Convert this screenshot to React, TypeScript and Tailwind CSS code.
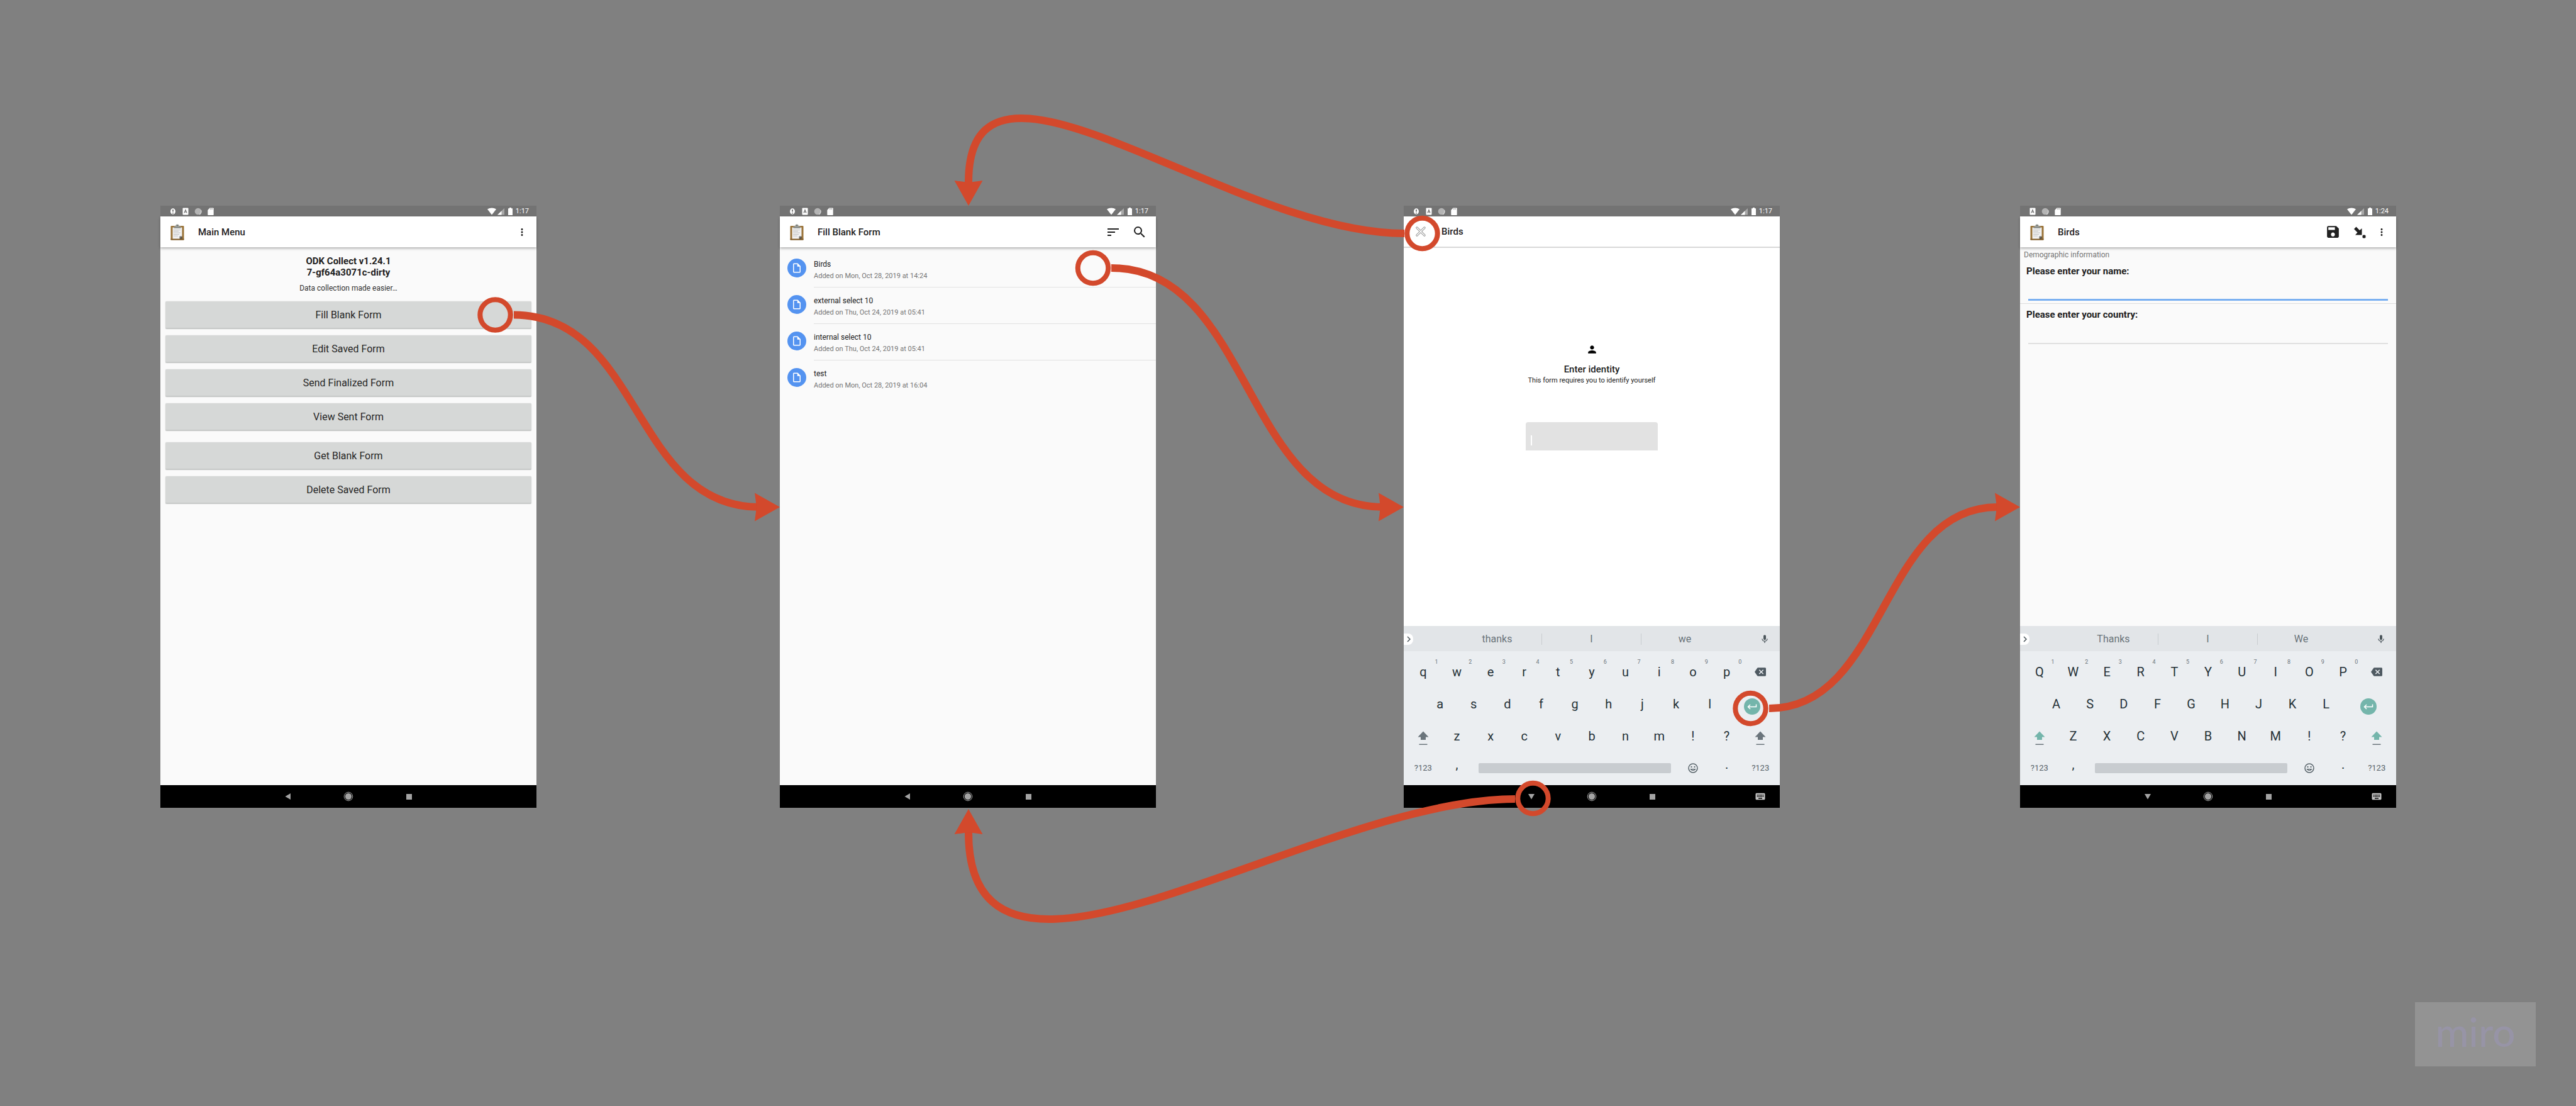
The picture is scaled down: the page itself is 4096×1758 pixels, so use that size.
import type { ReactNode } from "react";
import {
  MdBackspace,
  MdKeyboard,
  MdMic,
  MdMoreVert,
  MdOutlineInsertDriveFile,
  MdPerson,
  MdSave,
  MdSearch,
  MdSort,
} from "react-icons/md";

/* ---------- small drawings ---------- */

function ClipboardIcon() {
  return (
    <svg viewBox="0 0 22 26" className="h-[26px] w-[22px]" aria-hidden="true">
      <rect x="0.5" y="3" width="21" height="22.5" rx="1" fill="#9a7338" />
      <rect x="0.5" y="23.5" width="21" height="2" fill="#7d5a28" />
      <path d="M3.5 5.5h15v14l-4 4h-11z" fill="#f1f1f1" />
      <path d="M18.5 19.5l-4 4v-4z" fill="#6e6e6e" />
      <path d="M14.5 23.5l4-4v4z" fill="#4f4f4f" />
      <path d="M5 9.500h11M5 11.500h8M5 14h11M5 16.500h9M5 19h7" stroke="#bdbdbd" strokeWidth="0.9" />
      <path d="M5.500 6.500V3.800h2.700C8.200 1.500 9.300 0.500 11 0.500s2.800 1 2.800 3.300h2.700v2.700z" fill="#9ba09c" />
      <path d="M5.500 5.500h11v1h-11z" fill="#6d716e" />
      <circle cx="11" cy="2.600" r="1" fill="#6b6b6b" />
    </svg>
  );
}

function CloseIcon() {
  return (
    <svg viewBox="0 0 16 16" className="size-4" aria-hidden="true">
      <path d="M2 2l12 12M14 2L2 14" stroke="#8f8f8f" strokeWidth="3.200" strokeLinecap="round" />
      <path d="M2 2l12 12M14 2L2 14" stroke="#ffffff" strokeWidth="1.600" strokeLinecap="round" />
    </svg>
  );
}

function JumpIcon() {
  return (
    <svg viewBox="0 0 24 24" className="size-6" aria-hidden="true">
      <path d="M6.500 3.500L12 9l3.500-3v10.500H5L8.500 12.500 3 7z" fill="#212121" />
      <rect x="16.500" y="16.500" width="5" height="5" rx="1.500" fill="#212121" />
    </svg>
  );
}

function AlertGlyph() {
  return (
    <svg viewBox="0 0 10 12" className="h-3 w-2.5" aria-hidden="true">
      <ellipse cx="5" cy="6" rx="4" ry="4.700" fill="#ffffff" />
      <path d="M5 3v3.500M5 8v1.500" stroke="#737373" strokeWidth="1.800" />
    </svg>
  );
}

function LetterGlyph() {
  return (
    <svg viewBox="0 0 10 12" className="h-3 w-2.5" aria-hidden="true">
      <rect x="0.500" y="0.500" width="9" height="11" rx="1" fill="#ffffff" />
      <path d="M3 8.500L5 3.500l2 5M3.800 7h2.500" stroke="#737373" strokeWidth="1.200" fill="none" />
    </svg>
  );
}

function DiscGlyph() {
  return (
    <svg viewBox="0 0 12 12" className="size-3" aria-hidden="true">
      <circle cx="6" cy="6" r="5.300" fill="#b4b4b4" />
      <path d="M10.500 4A5.300 5.300 0 0 1 8 11" stroke="#dcdcdc" strokeWidth="1.200" fill="none" />
    </svg>
  );
}

function CardGlyph() {
  return (
    <svg viewBox="0 0 10 12" className="h-3 w-2.5" aria-hidden="true">
      <path d="M3.500 0.500H9a0.700 0.700 0 0 1 0.700 0.700v10a0.700 0.700 0 0 1-0.700 0.700H1a0.700 0.700 0 0 1-0.700-0.700V4z" fill="#ffffff" />
      <path d="M4.300 1.200v2M6 1.200v2M7.700 1.200v2" stroke="#8f8f8f" strokeWidth="0.800" />
    </svg>
  );
}

function SignalGlyphs() {
  return (
    <svg viewBox="0 0 42 14" className="h-3.5 w-[42px]" aria-hidden="true">
      <path d="M1 3.500C5 0.800 11 0.800 15 3.500L8 12.500z" fill="#ffffff" />
      <path d="M28 2v10.500H17z" fill="#a8a8a8" />
      <path d="M23.500 6.300v6.200H17z" fill="#ffffff" />
      <path d="M34 2.200h2V1h3v1.200h2V13h-7z" fill="#ffffff" />
    </svg>
  );
}

function ShiftIcon({ active }: { active: boolean }) {
  return (
    <svg viewBox="0 0 18 23" className="h-[23px] w-[18px]" aria-hidden="true">
      <path d="M9 0.500L17.500 9.500H13V14H5V9.500H0.500z" fill={active ? "#74b5ab" : "#6b757c"} />
      <rect x="2.500" y="20.500" width="13" height="1.500" fill="#6b757c" />
    </svg>
  );
}

function FaceIcon() {
  return (
    <svg viewBox="0 0 18 18" className="size-[18px]" aria-hidden="true">
      <circle cx="9" cy="9" r="7" fill="none" stroke="#59646b" strokeWidth="1.500" />
      <rect x="5.500" y="6" width="2" height="2" fill="#59646b" />
      <rect x="10.500" y="6" width="2" height="2" fill="#59646b" />
      <path d="M5.500 10.500q3.500 4 7 0z" fill="none" stroke="#59646b" strokeWidth="1.200" />
    </svg>
  );
}

function EnterIcon() {
  return (
    <svg viewBox="0 0 26 26" className="size-[26px]" aria-hidden="true">
      <circle cx="13" cy="13" r="13" fill="#74b5ab" />
      <path d="M19.500 9.500v4H7M10 10l-3.500 3.500L10 17" fill="none" stroke="#ffffff" strokeWidth="1.500" />
    </svg>
  );
}

/* ---------- phone chrome ---------- */

type PhoneProps = {
  title: string;
  time: string;
  leading?: ReactNode;
  actions?: ReactNode;
  alert?: boolean;
  flat?: boolean;
  keyboard?: "lower" | "upper";
  children: ReactNode;
};

function StatusBar({ time, alert }: { time: string; alert: boolean }) {
  return (
    <div className="flex h-[17px] shrink-0 items-center bg-[#737373] pl-2.5 pr-3 text-white">
      {alert && <span className="flex w-5 justify-center"><AlertGlyph /></span>}
      <span className="flex w-5 justify-center"><LetterGlyph /></span>
      <span className="flex w-5 justify-center"><DiscGlyph /></span>
      <span className="flex w-5 justify-center"><CardGlyph /></span>
      <span className="ml-auto flex items-center gap-1">
        <SignalGlyphs />
        <span className="text-[11px] leading-none">{time}</span>
      </span>
    </div>
  );
}

function NavBar({ withKeyboard }: { withKeyboard: boolean }) {
  return (
    <nav className="relative flex h-9 shrink-0 items-center justify-center gap-20 bg-black">
      <button aria-label="Back" className="flex w-4 justify-center">
        <svg viewBox="0 0 10 10" className="size-2.5" aria-hidden="true">
          <path d={withKeyboard ? "M0 1h10L5 9.500z" : "M9 0v10L0.500 5z"} fill="#a3a3a3" />
        </svg>
      </button>
      <button aria-label="Home" className="flex w-4 justify-center">
        <svg viewBox="0 0 16 16" className="size-4" aria-hidden="true">
          <circle cx="8" cy="8" r="6.800" fill="none" stroke="#a3a3a3" strokeWidth="1" />
          <circle cx="8" cy="8" r="5.200" fill="#a3a3a3" />
        </svg>
      </button>
      <button aria-label="Recent apps" className="flex w-4 justify-center">
        <span className="size-[9px] bg-[#a3a3a3]" />
      </button>
      {withKeyboard && (
        <button aria-label="Choose keyboard" className="absolute right-[22px] text-[#c4c4c4]">
          <MdKeyboard size={18} />
        </button>
      )}
    </nav>
  );
}

function Key({ children, hint, className = "col-span-2", label }: { children?: ReactNode; hint?: string; className?: string; label?: string }) {
  return (
    <button aria-label={label} className={`${className} relative flex h-full items-center justify-center`}>
      {children}
      {hint && <span className="absolute right-[3px] top-[5px] text-[9px] leading-none text-[#6b757c]">{hint}</span>}
    </button>
  );
}

function Keyboard({ mode }: { mode: "lower" | "upper" }) {
  const upper = mode === "upper";
  const cased = (text: string) => (upper ? text.toUpperCase() : text);
  const words = upper ? ["Thanks", "I", "We"] : ["thanks", "I", "we"];
  return (
    <div className="shrink-0 bg-[#ebeef1] text-[#263238]">
      <div className="flex h-10 items-center bg-[#e2e5e8] pt-0.5 text-base leading-none text-[#6a747a]">
        <button aria-label="More" className="flex h-[18px] w-[15px] items-center justify-center rounded-r-lg bg-white">
          <svg viewBox="0 0 6 10" className="h-2.5 w-1.5" aria-hidden="true">
            <path d="M1 1l4 4-4 4" fill="none" stroke="#4b555b" strokeWidth="1.500" />
          </svg>
        </button>
        <div className="grid flex-1 grid-cols-[142fr_158fr_138fr] pl-[63px]">
          {words.map((word, i) => (
            <button key={word} className={i < 2 ? "h-[18px] border-r border-[#c9cdd0] leading-[18px]" : "h-[18px] leading-[18px]"}>
              {word}
            </button>
          ))}
        </div>
        <button aria-label="Voice input" className="flex w-[82px] justify-center pl-[34px] text-[#4b555b]">
          <MdMic size={16} />
        </button>
      </div>
      <div className="grid h-[213px] auto-rows-fr grid-cols-[repeat(22,minmax(0,1fr))] px-1 pb-0.5 pt-2 text-xl leading-none">
        {"qwertyuiop".split("").map((c, i) => (
          <Key key={c} hint={String((i + 1) % 10)}>{cased(c)}</Key>
        ))}
        <Key label="Backspace"><MdBackspace size={18} className="text-[#4f5a62]" /></Key>
        <span />
        {"asdfghjkl".split("").map((c) => (
          <Key key={c}>{cased(c)}</Key>
        ))}
        <Key label="Enter" className="col-span-3 pt-2"><EnterIcon /></Key>
        <Key label="Shift" className="col-span-2 pt-2"><ShiftIcon active={upper} /></Key>
        {"zxcvbnm!?".split("").map((c) => (
          <Key key={c}>{cased(c)}</Key>
        ))}
        <Key label="Right shift" className="col-span-2 pt-2"><ShiftIcon active={upper} /></Key>
        <Key className="col-span-2 text-[13px] text-[#59646b]">?123</Key>
        <Key className="col-span-2 pb-3">,</Key>
        <Key label="Space" className="col-span-12 px-2"><span className="h-4 w-full rounded-xs bg-[#c8ccd0]" /></Key>
        <Key label="Emoji"><FaceIcon /></Key>
        <Key className="col-span-2 pb-3">.</Key>
        <Key className="col-span-2 text-[13px] text-[#59646b]">?123</Key>
      </div>
    </div>
  );
}

function Phone({ title, time, leading, actions, alert = true, flat = false, keyboard, children }: PhoneProps) {
  return (
    <section aria-label={title} className="flex aspect-[598/957] flex-col bg-[#fafafa] text-[#212121]">
      <StatusBar time={time} alert={alert} />
      <header
        className={
          flat
            ? "flex h-[50px] shrink-0 items-center border-b-2 border-[#d8d8d8] bg-white pr-3.5"
            : "z-1 flex h-[49px] shrink-0 items-center bg-white pr-3.5 shadow-[0_2px_4px_rgba(0,0,0,0.3)]"
        }
      >
        <div className="flex w-[60px] pl-4">{leading ?? <ClipboardIcon />}</div>
        <h1 className="text-[15px] font-medium leading-5">{title}</h1>
        <div className="ml-auto flex items-center gap-[18px]">{actions}</div>
      </header>
      <div className={flat ? "flex flex-1 flex-col bg-white" : "flex flex-1 flex-col"}>{children}</div>
      {keyboard && <Keyboard mode={keyboard} />}
      <NavBar withKeyboard={keyboard !== undefined} />
    </section>
  );
}

function MoreButton({ className }: { className?: string }) {
  return (
    <button aria-label="More options" className={className}>
      <MdMoreVert size={18} />
    </button>
  );
}

/* ---------- screens ---------- */

function MenuButton({ children }: { children: ReactNode }) {
  return (
    <button className="h-11 rounded-xs border-b-2 border-[#c6c8c7] bg-[#d6d8d7] pt-0.5 text-base leading-none text-[#262626] shadow-[0_0_2px_rgba(0,0,0,0.12)]">
      {children}
    </button>
  );
}

function MainMenu() {
  return (
    <Phone title="Main Menu" time="1:17" actions={<MoreButton />}>
      <div className="pt-[13px] text-center">
        <p className="text-[15px] font-bold leading-[18px]">ODK Collect v1.24.1<br />7-gf64a3071c-dirty</p>
        <p className="pt-2 text-xs leading-4 text-[#333333]">Data collection made easier…</p>
      </div>
      <div className="flex flex-col gap-2.5 px-2 pt-[13px]">
        <MenuButton>Fill Blank Form</MenuButton>
        <MenuButton>Edit Saved Form</MenuButton>
        <MenuButton>Send Finalized Form</MenuButton>
        <MenuButton>View Sent Form</MenuButton>
      </div>
      <div className="flex flex-col gap-2.5 px-2 pt-[18px]">
        <MenuButton>Get Blank Form</MenuButton>
        <MenuButton>Delete Saved Form</MenuButton>
      </div>
    </Phone>
  );
}

const forms = [
  { name: "Birds", added: "Added on Mon, Oct 28, 2019 at 14:24" },
  { name: "external select 10", added: "Added on Thu, Oct 24, 2019 at 05:41" },
  { name: "internal select 10", added: "Added on Thu, Oct 24, 2019 at 05:41" },
  { name: "test", added: "Added on Mon, Oct 28, 2019 at 16:04" },
];

function FillBlankForm() {
  return (
    <Phone
      title="Fill Blank Form"
      time="1:17"
      actions={
        <>
          <button aria-label="Sort"><MdSort size={24} /></button>
          <button aria-label="Search"><MdSearch size={24} /></button>
        </>
      }
    >
      <ul className="pt-1.5">
        {forms.map((form, i) => (
          <li key={form.name} className="flex h-[58px] pl-3">
            <span className="mt-3 flex size-[30px] shrink-0 items-center justify-center rounded-full bg-[#5493f0] text-white">
              <MdOutlineInsertDriveFile size={18} />
            </span>
            <span className={i < forms.length - 1 ? "ml-3 flex-1 border-b border-[#e2e2e2] pt-3.5" : "ml-3 flex-1 pt-3.5"}>
              <span className="block text-xs leading-[15px]">{form.name}</span>
              <span className="block pt-1 text-[11px] leading-[14px] text-[#757575]">{form.added}</span>
            </span>
          </li>
        ))}
      </ul>
    </Phone>
  );
}

function EnterIdentity() {
  return (
    <Phone
      title="Birds"
      time="1:17"
      flat
      keyboard="lower"
      leading={<button aria-label="Close" className="ml-[3px]"><CloseIcon /></button>}
    >
      <div className="flex flex-col items-center pt-[152px]">
        <MdPerson size={19} className="text-black" />
        <h2 className="pt-3 text-[15px] font-medium leading-5">Enter identity</h2>
        <label htmlFor="identity" className="text-[11px] leading-[15px]">This form requires you to identify yourself</label>
        <div className="mt-[59px] flex h-[45px] w-[210px] items-center rounded-t-sm bg-[#e2e2e2] pl-2 pt-3">
          <span className="h-4 w-0.5 bg-white" />
          <input id="identity" type="text" className="w-full bg-transparent text-xs outline-none" />
        </div>
      </div>
    </Phone>
  );
}

function Demographics() {
  return (
    <Phone
      title="Birds"
      time="1:24"
      alert={false}
      keyboard="upper"
      actions={
        <>
          <button aria-label="Save"><MdSave size={25} /></button>
          <button aria-label="Jump to"><JumpIcon /></button>
          <MoreButton className="-ml-1" />
        </>
      }
    >
      <p className="pl-1.5 pt-1 text-xs leading-4 text-[#757575]">Demographic information</p>
      <div className="border-b border-[#dedede] px-2.5 pt-2">
        <label htmlFor="name" className="block text-[15px] font-bold leading-5">Please enter your name:</label>
        <input id="name" type="text" className="mx-[3px] mb-1 block h-[37px] w-[calc(100%-6px)] border-b-[3px] border-[#7ab0f1] bg-transparent text-sm outline-none" />
      </div>
      <div className="px-2.5 pt-[7px]">
        <label htmlFor="country" className="block text-[15px] font-bold leading-5">Please enter your country:</label>
        <input id="country" type="text" className="mx-[3px] block h-[37px] w-[calc(100%-6px)] border-b-2 border-[#e0e0e0] bg-transparent text-sm outline-none" />
      </div>
    </Phone>
  );
}

/* ---------- connectors between the screens ---------- */

function Connectors() {
  return (
    <svg viewBox="0 0 4096 1758" className="pointer-events-none absolute left-0 top-0 z-10 w-full" aria-hidden="true">
      <g fill="none" stroke="#d3492c" strokeWidth="12">
        <path d="M817 500.500C1020 500.500 1005 806 1208 806" />
        <path d="M1767 426C1990 426 1977 806 2200 806" />
        <path d="M2813 1126C2999 1126 2990 806 3176 806" />
        <path d="M2233 371C1952 371 1540 20 1540 290" />
        <path d="M2409 1270C2085 1270 1540 1662 1540 1323" />
      </g>
      <g fill="none" stroke="#d3492c" strokeWidth="8">
        <circle cx="787.500" cy="500.500" r="24.200" />
        <circle cx="1738" cy="426" r="24.200" />
        <circle cx="2261.500" cy="371" r="24.200" />
        <circle cx="2783.500" cy="1126" r="24.200" />
        <circle cx="2437.500" cy="1269" r="24.200" />
      </g>
      <g fill="#d3492c">
        <path d="M1240 806l-40-22.500 3 22.500-3 22.500z" />
        <path d="M2232 806l-40-22.500 3 22.500-3 22.500z" />
        <path d="M3212 806l-40-22.500 3 22.500-3 22.500z" />
        <path d="M1540 327l-22.500-40 22.500 3 22.500-3z" />
        <path d="M1540 1286l-22.500 40 22.500-3 22.500 3z" />
      </g>
    </svg>
  );
}

export default function App() {
  return (
    <main className="relative min-h-screen w-full bg-[#808080] pt-[327px] font-['Roboto',sans-serif]">
      <div className="grid grid-cols-[598fr_387fr_598fr_394fr_598fr_382fr_598fr] pl-[255px] pr-[286px]">
        <MainMenu />
        <span />
        <FillBlankForm />
        <span />
        <EnterIdentity />
        <span />
        <Demographics />
      </div>
      <Connectors />
      <div className="absolute bottom-[63px] right-16 flex h-[102px] w-48 items-center justify-center bg-[#939393] pb-2 font-['Lato',sans-serif] text-[64px] font-medium leading-none text-[#9794a6]">
        miro
      </div>
    </main>
  );
}
